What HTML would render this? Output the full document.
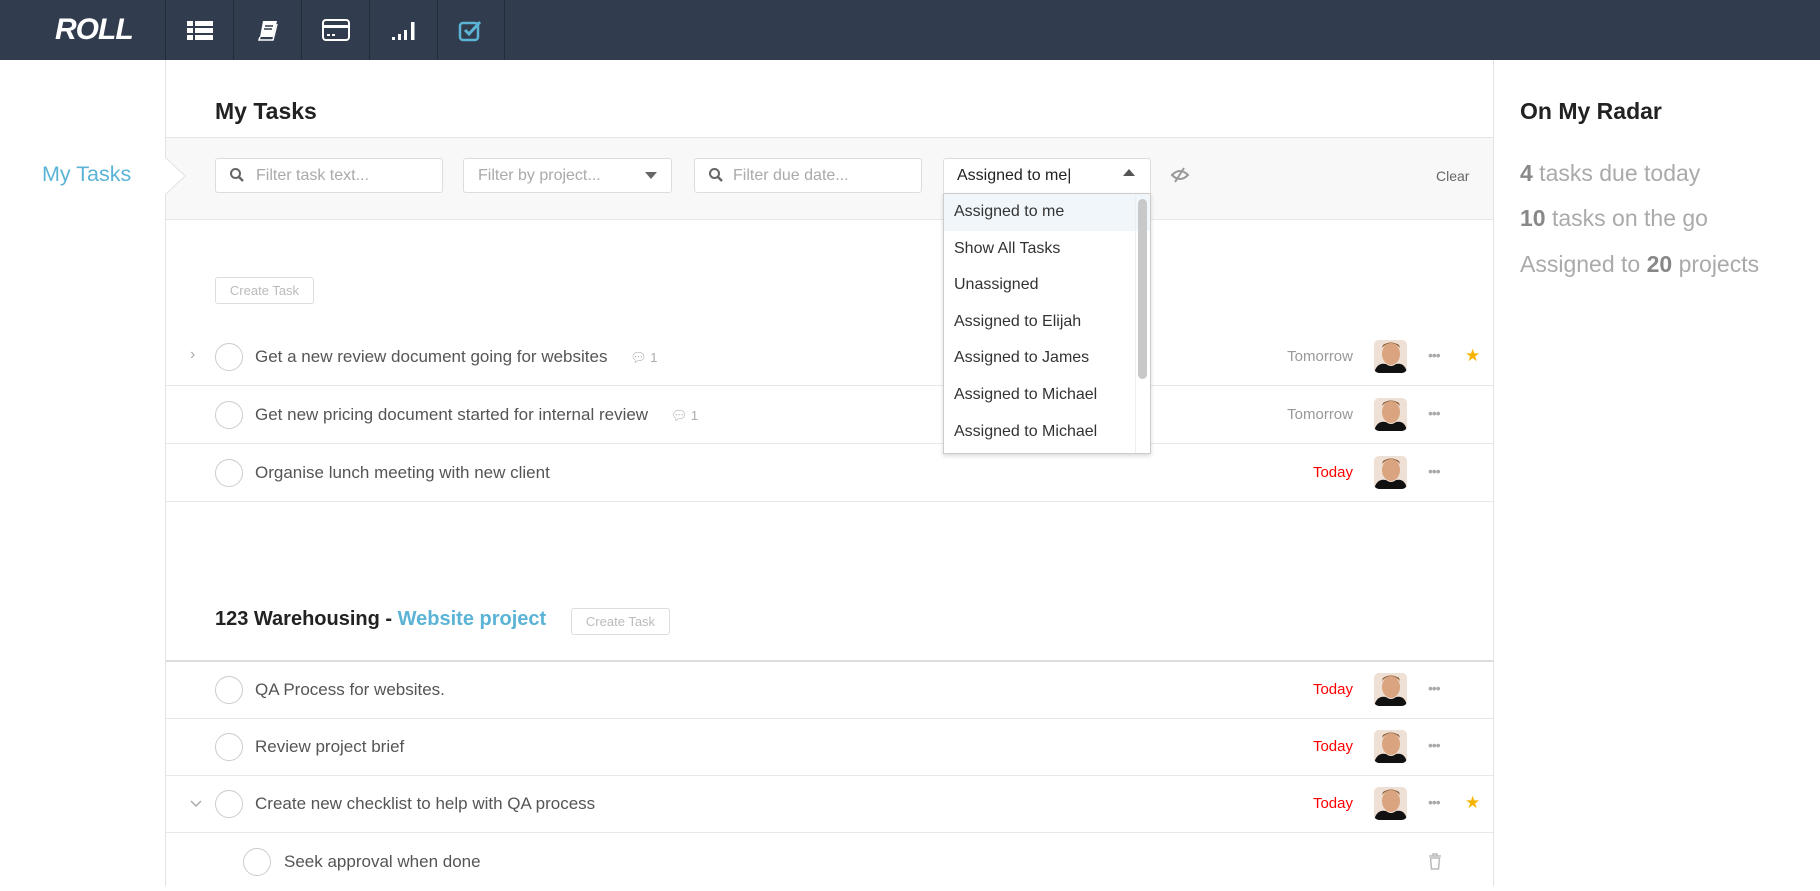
<!DOCTYPE html>
<html><head><meta charset="utf-8"><style>
*{box-sizing:border-box;margin:0;padding:0}
body{width:1820px;height:886px;overflow:hidden;background:#fff;font-family:"Liberation Sans",Arial,sans-serif;color:#555;position:relative}
.hdr{position:absolute;left:0;top:0;width:1820px;height:60px;background:#313c4e}
.logo{position:absolute;left:55px;top:13px;color:#fff;font-weight:900;font-style:italic;font-size:30px;letter-spacing:-1px}
.nav{position:absolute;top:0;height:60px;width:68px;border-left:1px solid #222b38;display:flex;align-items:center;justify-content:center}
.side{position:absolute;left:165px;top:60px;width:1px;height:826px;background:#e3e3e3}
.rside{position:absolute;left:1493px;top:60px;width:1px;height:826px;background:#e3e3e3}
.abs{position:absolute}
.fbar{position:absolute;left:166px;top:137px;width:1327px;height:83px;background:#f8f8f8;border-top:1px solid #e6e6e6;border-bottom:1px solid #e6e6e6}
.inp{position:absolute;top:158px;height:35px;background:#fff;border:1px solid #ddd;border-radius:3px;font-size:16px;color:#aaa;line-height:33px;padding-left:14px}
.row{position:absolute;left:166px;width:1327px;height:58px;border-bottom:1px solid #e8e8e8}
.circ{position:absolute;top:15px;width:28px;height:28px;border:1px solid #ccc;border-radius:50%}
.txt{position:absolute;top:19px;font-size:17px;color:#555}
.date{position:absolute;right:140px;top:20px;font-size:15px;color:#999}
.red{color:#f00}
.av{position:absolute;left:1208px;top:12px;width:33px;height:33px;border-radius:5px;overflow:hidden;background:#f1d9c8}
.dots{position:absolute;left:1262px;top:22px;font-size:14px;color:#aaa;letter-spacing:-1px;line-height:10px}
.star{position:absolute;left:1299px;top:18px;color:#f5b400;font-size:17px}
.btn{position:absolute;border:1px solid #ddd;border-radius:3px;font-size:13px;color:#bbb;text-align:center;background:#fff}
.dd{position:absolute;left:943px;top:193px;width:208px;height:261px;background:#fff;border:1px solid #ccc;box-shadow:0 2px 4px rgba(0,0,0,.15)}
.dd div{height:36.6px;line-height:36.6px;padding-left:10px;font-size:16px;color:#333}
</style></head><body>
<div class="hdr">
<div class="logo">ROLL</div>
<div class="nav" style="left:165px"><svg width="26" height="22"><rect x="0" y="2" width="6" height="5" fill="#fff"/><rect x="8" y="2" width="18" height="5" fill="#fff"/><rect x="0" y="9" width="6" height="5" fill="#fff"/><rect x="8" y="9" width="18" height="5" fill="#fff"/><rect x="0" y="16" width="6" height="5" fill="#fff"/><rect x="8" y="16" width="18" height="5" fill="#fff"/></svg></div>
<div class="nav" style="left:233px"><svg width="24" height="24"><path d="M7 3h14l-4 16H4z" fill="#fff"/><path d="M4 19l-1 3h14l4-16" fill="none" stroke="#fff" stroke-width="1.5"/><path d="M9 8h8M8 11h8" stroke="#313c4e" stroke-width="1.5"/></svg></div>
<div class="nav" style="left:301px"><svg width="28" height="22"><rect x="1" y="1" width="26" height="20" rx="3" fill="none" stroke="#fff" stroke-width="2"/><rect x="1" y="6" width="26" height="3" fill="#fff"/><path d="M5 16h3M10 16h3" stroke="#fff" stroke-width="2"/></svg></div>
<div class="nav" style="left:369px"><svg width="28" height="22"><rect x="2" y="18" width="3" height="3" fill="#fff"/><rect x="8" y="15" width="3" height="6" fill="#fff"/><rect x="14" y="11" width="3" height="10" fill="#fff"/><rect x="21" y="3" width="3.5" height="18" fill="#fff"/></svg></div>
<div class="nav" style="left:437px;border-right:1px solid #222b38"><svg width="26" height="24"><rect x="2" y="5" width="18" height="17" rx="3" fill="none" stroke="#5bb4d6" stroke-width="2.5"/><path d="M7 12l4 4 11-12" fill="none" stroke="#5bb4d6" stroke-width="3"/></svg></div>
</div>
<div class="side"></div><div class="rside"></div>
<div class="abs" style="left:42px;top:162px;font-size:21.5px;color:#5bb4d6">My Tasks</div>
<div class="abs" style="left:215px;top:98px;font-size:23px;font-weight:bold;color:#222">My Tasks</div>
<div class="fbar"></div>
<svg class="abs" style="left:165px;top:157px" width="22" height="38"><path d="M0 0L20 19L0 38" fill="#fff" stroke="#e3e3e3"/></svg>
<div class="inp" style="left:215px;width:228px;padding-left:40px">Filter task text...</div>
<svg class="abs" style="left:229px;top:167px" width="16" height="16"><circle cx="6.5" cy="6.5" r="4.5" fill="none" stroke="#666" stroke-width="2"/><path d="M10 10l4 4" stroke="#666" stroke-width="2.5"/></svg>
<div class="inp" style="left:463px;width:209px">Filter by project...</div>
<svg class="abs" style="left:645px;top:172px" width="12" height="7"><path d="M0 0h12L6 7z" fill="#666"/></svg>
<div class="inp" style="left:694px;width:228px;padding-left:38px">Filter due date...</div>
<svg class="abs" style="left:708px;top:167px" width="16" height="16"><circle cx="6.5" cy="6.5" r="4.5" fill="none" stroke="#666" stroke-width="2"/><path d="M10 10l4 4" stroke="#666" stroke-width="2.5"/></svg>
<div class="inp" style="left:943px;width:208px;color:#222;padding-left:13px;border-bottom-color:#fff;border-radius:3px 3px 0 0">Assigned to me|</div>
<svg class="abs" style="left:1123px;top:169px" width="12" height="7"><path d="M0 7h12L6 0z" fill="#555"/></svg>
<svg class="abs" style="left:1170px;top:167px" width="20" height="16"><path d="M2 8Q10 0 18 8Q10 16 2 8z" fill="none" stroke="#999" stroke-width="2"/><path d="M5 15L14 1" stroke="#999" stroke-width="2"/></svg>
<div class="abs" style="left:1436px;top:168px;font-size:14px;color:#666">Clear</div>
<div class="btn" style="left:215px;top:277px;width:99px;height:27px;line-height:25px">Create Task</div>

<div class="row" style="top:328px"><div class="abs" style="left:24px;top:18px;color:#aaa;font-size:16px">›</div><div class="circ" style="left:49px"></div><div class="txt" style="left:89px">Get a new review document going for websites <span style="color:#aaa;font-size:13px;margin-left:18px">💬︎ 1</span></div><div class="date">Tomorrow</div><div class="av"><svg width="33" height="33"><rect width="33" height="33" fill="#efe0d6"/><ellipse cx="17" cy="14" rx="9" ry="11" fill="#d9a47f"/><path d="M8 8Q17 -2 26 8L25 5Q17 0 9 5z" fill="#8a5a30"/><path d="M0 33Q3 22 12 24Q17 28 22 24Q31 22 33 33z" fill="#111"/></svg></div><div class="dots">•••</div><div class="star">★</div></div>
<div class="row" style="top:386px"><div class="circ" style="left:49px"></div><div class="txt" style="left:89px">Get new pricing document started for internal review <span style="color:#aaa;font-size:13px;margin-left:18px">💬︎ 1</span></div><div class="date">Tomorrow</div><div class="av"><svg width="33" height="33"><rect width="33" height="33" fill="#efe0d6"/><ellipse cx="17" cy="14" rx="9" ry="11" fill="#d9a47f"/><path d="M8 8Q17 -2 26 8L25 5Q17 0 9 5z" fill="#8a5a30"/><path d="M0 33Q3 22 12 24Q17 28 22 24Q31 22 33 33z" fill="#111"/></svg></div><div class="dots">•••</div></div>
<div class="row" style="top:444px"><div class="circ" style="left:49px"></div><div class="txt" style="left:89px">Organise lunch meeting with new client</div><div class="date red">Today</div><div class="av"><svg width="33" height="33"><rect width="33" height="33" fill="#efe0d6"/><ellipse cx="17" cy="14" rx="9" ry="11" fill="#d9a47f"/><path d="M8 8Q17 -2 26 8L25 5Q17 0 9 5z" fill="#8a5a30"/><path d="M0 33Q3 22 12 24Q17 28 22 24Q31 22 33 33z" fill="#111"/></svg></div><div class="dots">•••</div></div>

<div class="abs" style="left:215px;top:608px;font-size:20px;font-weight:bold;color:#222">123 Warehousing - <span style="color:#5bb4d6">Website project</span></div>
<div class="btn" style="left:571px;top:608px;width:99px;height:27px;line-height:25px">Create Task</div>
<div class="abs" style="left:166px;top:660px;width:1327px;height:2px;background:#ddd"></div>

<div class="row" style="top:661px"><div class="circ" style="left:49px"></div><div class="txt" style="left:89px">QA Process for websites.</div><div class="date red">Today</div><div class="av"><svg width="33" height="33"><rect width="33" height="33" fill="#efe0d6"/><ellipse cx="17" cy="14" rx="9" ry="11" fill="#d9a47f"/><path d="M8 8Q17 -2 26 8L25 5Q17 0 9 5z" fill="#8a5a30"/><path d="M0 33Q3 22 12 24Q17 28 22 24Q31 22 33 33z" fill="#111"/></svg></div><div class="dots">•••</div></div>
<div class="row" style="top:718px"><div class="circ" style="left:49px"></div><div class="txt" style="left:89px">Review project brief</div><div class="date red">Today</div><div class="av"><svg width="33" height="33"><rect width="33" height="33" fill="#efe0d6"/><ellipse cx="17" cy="14" rx="9" ry="11" fill="#d9a47f"/><path d="M8 8Q17 -2 26 8L25 5Q17 0 9 5z" fill="#8a5a30"/><path d="M0 33Q3 22 12 24Q17 28 22 24Q31 22 33 33z" fill="#111"/></svg></div><div class="dots">•••</div></div>
<div class="row" style="top:775px"><svg class="abs" style="left:24px;top:25px" width="12" height="8"><path d="M1 1l5 5 5-5" fill="none" stroke="#aaa" stroke-width="1.5"/></svg><div class="circ" style="left:49px"></div><div class="txt" style="left:89px">Create new checklist to help with QA process</div><div class="date red">Today</div><div class="av"><svg width="33" height="33"><rect width="33" height="33" fill="#efe0d6"/><ellipse cx="17" cy="14" rx="9" ry="11" fill="#d9a47f"/><path d="M8 8Q17 -2 26 8L25 5Q17 0 9 5z" fill="#8a5a30"/><path d="M0 33Q3 22 12 24Q17 28 22 24Q31 22 33 33z" fill="#111"/></svg></div><div class="dots">•••</div><div class="star">★</div></div>
<div class="row" style="top:833px;border-bottom:none"><div class="circ" style="left:77px"></div><div class="txt" style="left:118px">Seek approval when done</div><svg class="abs" style="left:1262px;top:20px" width="14" height="17"><path d="M1 3h12M5 3V1h4v2M2.5 5h9l-1 11h-7z" fill="none" stroke="#bbb" stroke-width="1.5"/></svg></div>

<div class="dd">
<div style="background:#f0f6fa">Assigned to me</div><div>Show All Tasks</div><div>Unassigned</div><div>Assigned to Elijah</div><div>Assigned to James</div><div>Assigned to Michael</div><div>Assigned to Michael</div>
<span style="position:absolute;left:191px;top:0;width:1px;height:259px;background:#eee"></span>
<span style="position:absolute;left:194px;top:5px;width:9px;height:180px;border-radius:5px;background:#c8c8c8"></span>
</div>

<div class="abs" style="left:1520px;top:98px;font-size:23px;font-weight:bold;color:#222">On My Radar</div>
<div class="abs" style="left:1520px;top:160px;font-size:23px;color:#aaa"><b style="color:#888">4</b> tasks due today</div>
<div class="abs" style="left:1520px;top:205px;font-size:23px;color:#aaa"><b style="color:#888">10</b> tasks on the go</div>
<div class="abs" style="left:1520px;top:251px;font-size:23px;color:#aaa">Assigned to <b style="color:#888">20</b> projects</div>
</body></html>
